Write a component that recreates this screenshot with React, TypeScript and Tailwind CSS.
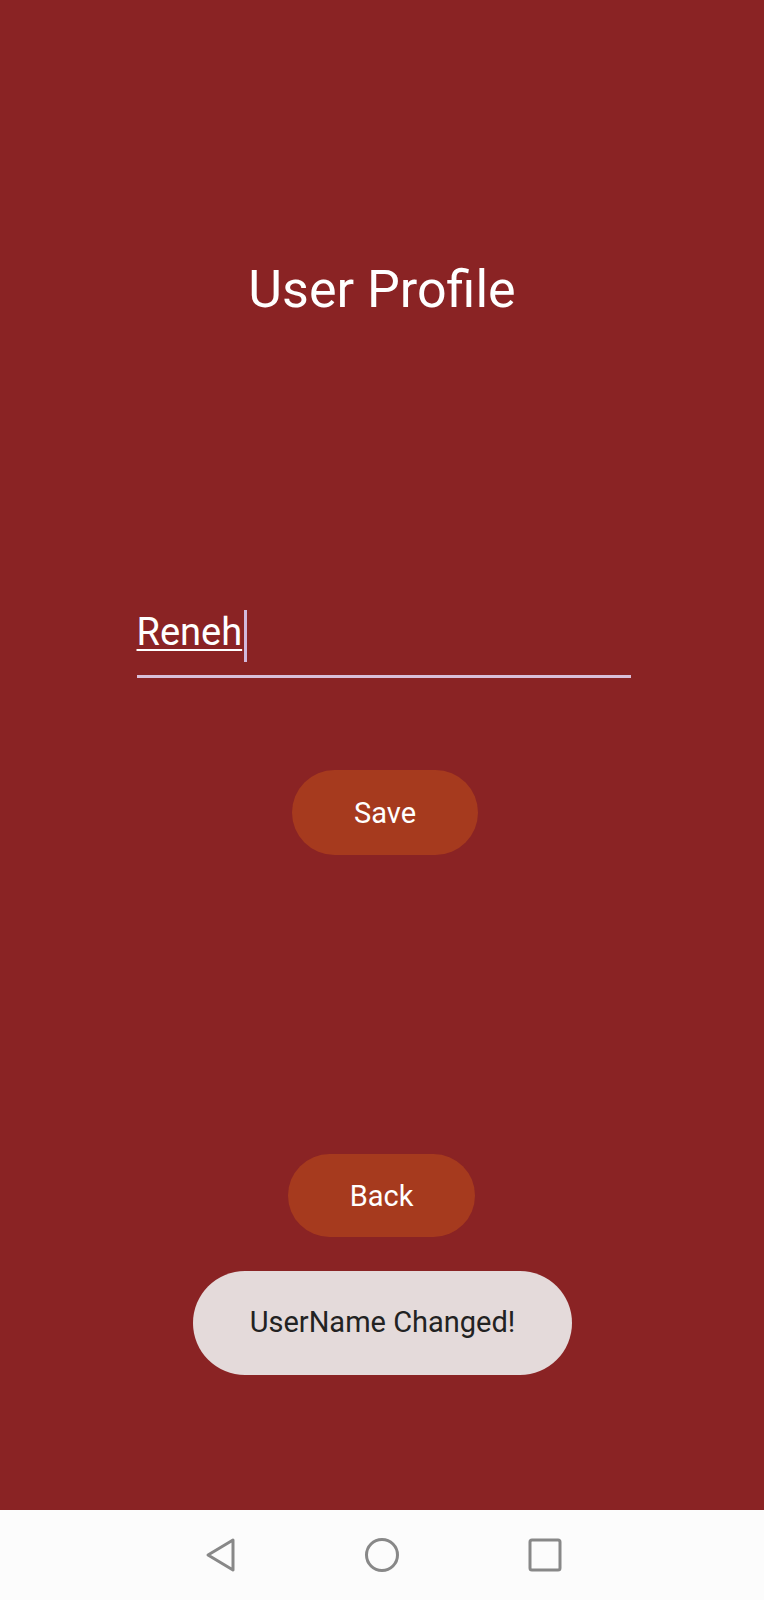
import { useState } from 'react';

export default function App() {
  const [name, setName] = useState('Reneh');

  return (
    <div className="w-[764px] h-[1600px] flex flex-col font-['Roboto',sans-serif]">
      <main className="h-[1510px] bg-[#8a2324] flex flex-col items-center">
        <h1 className="mt-[260px] text-[52px] leading-[60px] text-white font-normal">User Profile</h1>

        <div className="mt-[280px] w-[494px] h-[78px] ml-[3px] border-b-[3px] border-[#d9bfd9] flex items-end pb-[19px]">
          <span className="text-[38px] leading-[48px] text-white underline decoration-2 underline-offset-[4px]">{name}</span>
          <span className="w-[3px] h-[52px] bg-[#d2b8dc] ml-[2px] mb-[-6px]" />
          <input className="hidden" value={name} onChange={(e) => setName(e.target.value)} />
        </div>

        <button className="mt-[92px] ml-[6px] w-[186px] h-[85px] rounded-full bg-[#a63a1e] text-white text-[29px] pt-[2px]">
          Save
        </button>

        <button className="mt-[299px] ml-[-1px] w-[187px] h-[83px] rounded-full bg-[#a63a1e] text-white text-[29px] pt-[2px]">
          Back
        </button>

        <div className="mt-[34px] ml-[1px] w-[379px] h-[104px] rounded-[52px] bg-[#e4dada] flex items-center justify-center">
          <span className="text-[29px] text-[#222]">UserName Changed!</span>
        </div>
      </main>

      <nav className="h-[90px] bg-[#fcfcfc] flex items-center justify-center">
        <div className="w-[358px] ml-[1px] flex items-center justify-between">
          <svg width="32" height="36" viewBox="0 0 32 36" fill="none" stroke="#888" strokeWidth="3" strokeLinejoin="round">
            <path d="M29 3 L4 18 L29 33 Z" />
          </svg>
          <svg width="36" height="36" viewBox="0 0 36 36" fill="none" stroke="#888" strokeWidth="3">
            <circle cx="18" cy="18" r="15.5" />
          </svg>
          <svg width="34" height="34" viewBox="0 0 34 34" fill="none" stroke="#888" strokeWidth="3">
            <rect x="2" y="2" width="30" height="30" rx="2" />
          </svg>
        </div>
      </nav>
    </div>
  );
}
